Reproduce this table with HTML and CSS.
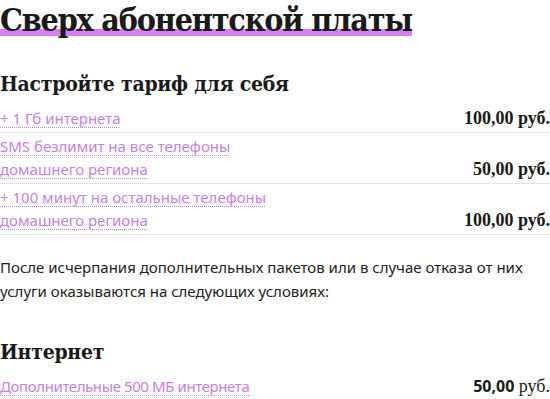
FILE: index.html
```html
<!DOCTYPE html>
<html lang="ru">
<head>
<meta charset="utf-8">
<link rel="stylesheet" href="styles.css">
</head>
<body>
<div class="page">
  <h1 class="title"><span class="title-text">Сверх абонентской платы</span></h1>

  <h2 class="section-title">Настройте тариф для себя</h2>
  <div class="list">
    <div class="row">
      <a class="link" href="#">+ 1 Гб интернета</a>
      <span class="price">100,00 руб.</span>
    </div>
    <div class="row">
      <a class="link" href="#">SMS безлимит на все телефоны<br>домашнего региона</a>
      <span class="price">50,00 руб.</span>
    </div>
    <div class="row">
      <a class="link" href="#">+ 100 минут на остальные телефоны<br>домашнего региона</a>
      <span class="price">100,00 руб.</span>
    </div>
  </div>

  <p class="note">После исчерпания дополнительных пакетов или в случае отказа от них<br>услуги оказываются на следующих условиях:</p>

  <h2 class="section-title section-title--second">Интернет</h2>
  <div class="list">
    <div class="row row--plain">
      <a class="link link--narrow" href="#">Дополнительные 500 МБ интернета</a>
      <span class="price price--mixed"><b class="amount">50,00</b> <span class="unit">руб.</span></span>
    </div>
  </div>
</div>
</body>
</html>
```
FILE: styles.css
```css
html, body {
  margin: 0;
  padding: 0;
  background: #ffffff;
}

.page {
  width: 550px;
  color: #1e1e1e;
  font-family: "Noto Sans", "Open Sans", sans-serif;
}

.title {
  margin: 0;
  font-family: "DejaVu Serif Condensed", "DejaVu Serif", serif;
  font-stretch: condensed;
  font-weight: bold;
  font-size: 32px;
  line-height: 40px;
  letter-spacing: -1.2px;
  color: #1a1a1a;
  white-space: nowrap;
}

.title-text {
  background-image: linear-gradient(#d780f0, #d780f0);
  background-repeat: no-repeat;
  background-size: 100% 7px;
  background-position: 0 28px;
}

.section-title {
  margin: 30px 0 7px;
  font-family: "DejaVu Serif Condensed", "DejaVu Serif", serif;
  font-stretch: condensed;
  font-weight: bold;
  font-size: 21px;
  line-height: 28px;
  letter-spacing: -0.25px;
  color: #1a1a1a;
}

.section-title--second {
  margin-top: 35px;
}

.list {
  display: flex;
  flex-direction: column;
}

.row {
  display: flex;
  justify-content: space-between;
  align-items: flex-end;
  padding: 2px 0;
  border-bottom: 1px solid #e2e2e2;
  font-size: 15px;
  line-height: 23px;
}

.row--plain {
  border-bottom: none;
}

.link {
  color: #c880e2;
  text-decoration: underline dotted;
  text-decoration-thickness: 1px;
  text-underline-offset: 3px;
}

.link--narrow {
  letter-spacing: -0.4px;
}

.price {
  font-family: "Liberation Serif", serif;
  font-weight: bold;
  font-size: 18px;
  color: #1a1a1a;
  white-space: nowrap;
}

.price--mixed {
  font-weight: normal;
}

.amount {
  font-family: "Noto Sans", sans-serif;
  font-weight: bold;
  font-size: 16px;
}

.unit {
  font-family: "Liberation Serif", serif;
  font-size: 18px;
}

.note {
  margin: 20px 0 0;
  font-size: 15px;
  line-height: 24px;
  color: #222;
}
```
